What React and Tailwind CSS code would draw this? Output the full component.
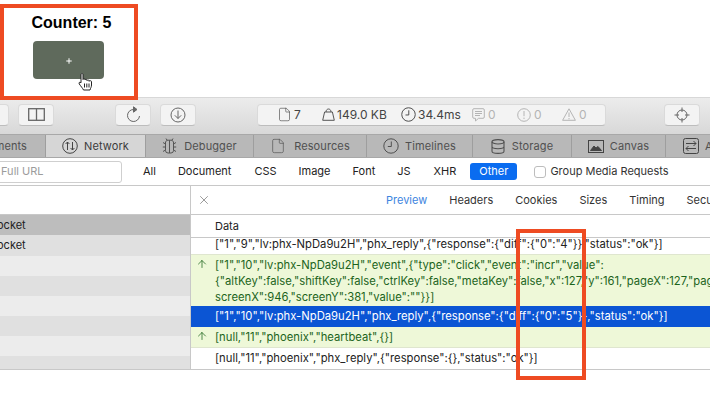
import React from "react";
import { File, X, ArrowUp, Plus } from "lucide-react";

const font = { fontFamily: "Inter, 'Liberation Sans', sans-serif" };

function ClockIcon({ size = 15, color = "#444" }) {
  return (
    <svg width={size} height={size} viewBox="0 0 16 16" fill="none" stroke={color} strokeWidth="1" className="shrink-0">
      <circle cx="8" cy="8" r="7.2" />
      <path d="M8.3 3.5V8.5H4.8" />
    </svg>
  );
}

function ToolBtn({ className, children }) {
  return (
    <div className={"h-[22px] w-[36px] shrink-0 flex items-center justify-center rounded-[4px] bg-[#f3f3f3] border border-[#dadada] border-b-[#bdbdbd] text-[#6b6b6b] " + className}>
      {children}
    </div>
  );
}

function Stat({ w, gap, icon, text, muted }) {
  return (
    <div style={{ width: w, gap }} className={"shrink-0 flex items-center " + (muted ? "text-[#b4b4b4]" : "text-[#444]")}>
      {icon}
      <span>{text}</span>
    </div>
  );
}

function Tab({ w, gap = 6, icon, label, active }) {
  return (
    <div style={{ width: w, gap }} className={"h-full shrink-0 flex items-center justify-center border-r border-[#9e9e9e] " + (active ? "bg-[#d6d6d6] text-[#3c3c3c]" : "bg-[#b8b8b8] text-[#505050]")}>
      {icon}
      <span>{label}</span>
    </div>
  );
}

const filters = [
  ["All", "ml-[21px]"], ["Document", "ml-[22px]"], ["CSS", "ml-[23px]"], ["Image", "ml-[22px]"],
  ["Font", "ml-[22px]"], ["JS", "ml-[22px]"], ["XHR", "ml-[23px]"],
];

const leftRows = [
  ["bg-[#bdbdbd]", "h-[20px]"], ["bg-[#e0e0e0]", "h-[21px]"], ["bg-[#ececec]", "h-[20px]"], ["bg-[#e0e0e0]", "h-[20px]"],
  ["bg-[#ececec]", "h-[20px]"], ["bg-[#e0e0e0]", "h-[20px]"], ["bg-[#ececec]", "h-[20px]"], ["bg-[#e0e0e0]", "h-[13px]"],
];

export default function App() {
  return (
    <div style={font} className="relative w-[710px] h-[400px] overflow-hidden bg-white text-[11px] text-[#222]">
      {/* Page */}
      <div className="h-[97px] w-[137px] flex flex-col items-center pt-[13px]">
        <h1 className="text-[16px] leading-[20px] font-bold text-black ml-[6px]" style={{ fontFamily: "'Liberation Sans', sans-serif" }}>Counter: 5</h1>
        <div className="mt-[8px] w-[71px] h-[38px] pt-[2px] rounded-[4px] bg-[#5f6a5c] flex items-center justify-center text-white">
          <Plus size={8} strokeWidth={3} />
        </div>
      </div>

      {/* Toolbar */}
      <div className="h-[37px] flex items-center bg-gradient-to-b from-[#ececec] to-[#d8d8d8] pb-[3px] text-[12px] border-t border-[#d8d8d8]">
        <ToolBtn className="-ml-[27px]" />
        <ToolBtn className="ml-[9px]">
          <svg width="17" height="13" viewBox="0 0 17 13" fill="none" stroke="#666" strokeWidth="1.3"><rect x="0.7" y="0.7" width="15.6" height="11.6" /><line x1="8.5" y1="0.7" x2="8.5" y2="12.3" /></svg>
        </ToolBtn>
        <ToolBtn className="ml-[61px]">
          <svg width="15" height="17" viewBox="0 0 15 17" fill="none" stroke="#666" strokeWidth="1"><path d="M7.5 3.5A6 6 0 1 0 13.5 10" /><path d="M7.5 0.8L11 3.5L7.5 6.2Z" fill="#666" /></svg>
        </ToolBtn>
        <ToolBtn className="ml-[9px]">
          <svg width="16" height="16" viewBox="0 0 16 16" fill="none" stroke="#666" strokeWidth="1"><circle cx="8" cy="8" r="7" /><path d="M8 3.5V11.5M4.8 8.3L8 11.5L11.2 8.3" /></svg>
        </ToolBtn>
        <div className="ml-[61px] w-[349px] h-[22px] flex items-center rounded-[4px] bg-[#f3f3f3] border border-[#dadada] border-b-[#bdbdbd] whitespace-nowrap">
          <Stat w={46} gap={2} icon={<File size={15} strokeWidth={1} className="ml-[19px]" />} text="7" />
          <div className="w-[18px] shrink-0" />
          <Stat w={79} gap={2} icon={
            <svg width="13" height="13" viewBox="0 0 13 13" fill="none" stroke="#555" strokeWidth="1"><path d="M0.7 12.3L2.6 4H10.4L12.3 12.3ZM4 4C4 0 9 0 9 4" /></svg>
          } text="149.0 KB" />
          <Stat w={71} gap={2} icon={<ClockIcon size={15} />} text="34.4ms" />
          <Stat w={45} gap={3} muted icon={
            <svg width="13" height="14" viewBox="0 0 13 14" fill="none" stroke="#b4b4b4" strokeWidth="1"><path d="M2 0.7H11A1.3 1.3 0 0 1 12.3 2V9A1.3 1.3 0 0 1 11 10.3H6.5L3.5 13V10.3H2A1.3 1.3 0 0 1 0.7 9V2A1.3 1.3 0 0 1 2 0.7ZM3 3.5H10M3 5.5H10M3 7.5H8" /></svg>
          } text="0" />
          <Stat w={45} gap={3} muted icon={
            <svg width="14" height="14" viewBox="0 0 14 14" fill="none" stroke="#b4b4b4" strokeWidth="1"><circle cx="7" cy="7" r="6.3" /><path d="M7 3V8.2M7 9.6V11" /></svg>
          } text="0" />
          <Stat w={30} gap={3} muted icon={
            <svg width="14" height="13" viewBox="0 0 14 13" fill="none" stroke="#b4b4b4" strokeWidth="1"><path d="M7 0.8L13.4 12.3H0.6ZM7 4.5V9M7 10V11.3" /></svg>
          } text="0" />
        </div>
        <ToolBtn className="ml-[58px]">
          <svg width="16" height="16" viewBox="0 0 16 16" fill="none" stroke="#666" strokeWidth="1"><circle cx="8" cy="8" r="5" /><path d="M8 0.5V5M8 11V15.5M0.5 8H5M11 8H15.5" /></svg>
        </ToolBtn>
      </div>

      {/* Tabs */}
      <div className="h-[24px] flex items-stretch text-[11px] tracking-[0.1px] border-y border-[#a8a8a8] bg-[#b8b8b8] whitespace-nowrap overflow-hidden">
        <div style={{ width: 46 }} className="shrink-0 h-full border-r border-[#9e9e9e] text-[#505050] flex items-center justify-end pr-[18px]"><span>ments</span></div>
        <Tab active w={100} label="Network" icon={
          <svg width="16" height="16" viewBox="0 0 16 16" fill="none" stroke="#444" strokeWidth="1"><circle cx="8" cy="8" r="7.3" /><path d="M5.5 12V4M3.6 6L5.5 4L7.4 6M10.5 4V12M8.6 10L10.5 12L12.4 10" /></svg>
        } />
        <Tab w={108} gap={7} label="Debugger" icon={
          <svg width="15" height="16" viewBox="0 0 15 16" fill="none" stroke="#555" strokeWidth="1"><path d="M5 2.2H10L11.5 4V12.5A2.5 2.5 0 0 1 9 15H6A2.5 2.5 0 0 1 3.5 12.5V4ZM7.5 2.2V15M3.5 6L1 4.5M11.5 6L14 4.5M3.5 9H0.8M11.5 9H14.2M3.5 12L1 13.5M11.5 12L14 13.5M5 2.2L4 0.5M10 2.2L11 0.5" /></svg>
        } />
        <Tab w={113} gap={8} label="Resources" icon={<File size={16} strokeWidth={1} />} />
        <Tab w={106} label="Timelines" icon={<ClockIcon size={16} color="#505050" />} />
        <Tab w={99} gap={7} label="Storage" icon={
          <svg width="14" height="15" viewBox="0 0 14 15" fill="none" stroke="#505050" strokeWidth="1.1"><ellipse cx="7" cy="2.8" rx="6" ry="2.2" /><path d="M1 2.8V12.2C1 13.4 3.7 14.4 7 14.4S13 13.4 13 12.2V2.8M1 7.5C1 8.7 3.7 9.7 7 9.7S13 8.7 13 7.5" /></svg>
        } />
        <Tab w={94} label="Canvas" icon={
          <svg width="16" height="13" viewBox="0 0 16 13" fill="none" stroke="#444"><rect x="0.5" y="0.5" width="15" height="12" /><path d="M2.5 10.5L6 6L8 8L10 6.5L13.5 10.5Z" fill="#444" /></svg>
        } />
        <div className="shrink-0 ml-[17px] flex items-center gap-[6px] text-[#505050]">
          <svg width="16" height="16" viewBox="0 0 16 16" fill="none" stroke="#444" strokeWidth="1"><rect x="0.5" y="0.5" width="15" height="15" rx="2" /><path d="M3 5.5H13M10.5 3L13 5.5L10.5 8M13 10.5H3M5.5 8L3 10.5L5.5 13" /></svg>
          <span>A</span>
        </div>
      </div>

      {/* Filter bar */}
      <div className="h-[28px] flex items-center text-[#222] whitespace-nowrap border-b border-[#c8c8c8]">
        <div className="-ml-[20px] w-[142px] h-[22px] shrink-0 bg-white border border-[#cfcfcf] rounded-[3px] flex items-center pl-[20px] text-[#9c9c9c]">Full URL</div>
        {filters.map(([f, c]) => <span key={f} className={c}>{f}</span>)}
        <span className="ml-[14px] h-[17px] w-[47px] flex items-center justify-center rounded-[3px] bg-[#0a6cf0] text-white">Other</span>
        <span className="ml-[17px] w-[12px] h-[12px] rounded-[3px] bg-white border border-[#bdbdbd]" />
        <span className="ml-[4px] text-[#333]">Group Media Requests</span>
      </div>

      {/* Split */}
      <div className="h-[184px] flex border-b border-[#c8c8c8] whitespace-nowrap">
        <div className="w-[191px] shrink-0 border-r border-[#c8c8c8]">
          <div className="h-[29px] border-b border-[#c8c8c8]" />
          {leftRows.map(([c, h], i) => (
            <div key={i} className={"flex items-center " + c + " " + h}>
              {i < 2 && <span className="-ml-[3px]">ocket</span>}
            </div>
          ))}
        </div>
        <div className="flex-1 min-w-0 overflow-hidden flex flex-col text-[11.25px]">
          <div className="h-[29px] shrink-0 flex items-center border-b border-[#c8c8c8] text-[11px]">
            <X size={14} strokeWidth={1} className="ml-[6px] text-[#555] shrink-0" />
            <div className="flex ml-[175px] gap-[22px] text-[#333]">
              <span className="text-[#3d85e0]">Preview</span>
              <span>Headers</span>
              <span>Cookies</span>
              <span>Sizes</span>
              <span>Timing</span>
              <span>Security</span>
            </div>
          </div>
          <div className="h-[23px] shrink-0 flex items-center pl-[24px] pt-[1px] border-b border-[#c8c8c8] text-[11px]">Data</div>
          <div className="h-[16px] shrink-0 pl-[24px] leading-[12px] overflow-hidden text-[#222]">{`["1","9","lv:phx-NpDa9u2H","phx_reply",{"response":{"diff":{"0":"4"}},"status":"ok"}]`}</div>
          <div className="h-[52px] shrink-0 bg-[#eef8d8] border-t border-[#dfe6cf] text-[#1c641c] relative pl-[24px] pt-[2px] leading-[16px]">
            <ArrowUp size={12} strokeWidth={1.5} className="absolute left-[5px] top-[3px]" />
            <div>{`["1","10","lv:phx-NpDa9u2H","event",{"type":"click","event":"incr","value":`}</div>
            <div>{`{"altKey":false,"shiftKey":false,"ctrlKey":false,"metaKey":false,"x":127,"y":161,"pageX":127,"pageY":161,`}</div>
            <div>{`screenX":946,"screenY":381,"value":""}}]`}</div>
          </div>
          <div className="h-[21px] shrink-0 bg-[#0b55d4] text-white flex items-center pl-[24px]">{`["1","10","lv:phx-NpDa9u2H","phx_reply",{"response":{"diff":{"0":"5"}},"status":"ok"}]`}</div>
          <div className="h-[21px] shrink-0 bg-[#eef8d8] border-b border-[#dfe6cf] text-[#1c641c] relative flex items-center pl-[24px]">
            <ArrowUp size={12} strokeWidth={1.5} className="absolute left-[5px] top-[3px]" />
            {`[null,"11","phoenix","heartbeat",{}]`}
          </div>
          <div className="h-[20px] shrink-0 flex items-center pl-[24px]">{`[null,"11","phoenix","phx_reply",{"response":{},"status":"ok"}]`}</div>
        </div>
      </div>

      {/* Bottom */}
      <div className="h-[30px] bg-white" />
      <div className="h-[1px] bg-[#555]" />

      {/* Overlays */}
      <div className="absolute left-0 top-[4px] w-[138px] h-[96px] border-[4px] border-[#ee4b22]" />
      <div className="absolute left-[516px] top-[229px] w-[70px] h-[151px] border-[4px] border-[#ee4b22]" />
      <svg width="15" height="18" viewBox="0 0 15 18" className="absolute left-[78px] top-[73px]" fill="#fff" stroke="#222" strokeWidth="1" strokeLinejoin="round">
        <path d="M3 1.5C3 0.3 5 0.3 5 1.5V6.5C5 5.4 7 5.4 7 6.5V7C7 6 9 6 9 7V7.6C9 6.7 11 6.7 11 7.6V8.3C11 7.5 13.5 7.5 13.5 8.5V12C13.5 14 12.5 15 12 17H5.5C4.5 15 3 13.5 1.3 11C0.4 9.6 1.8 8.5 3 9.8Z" />
        <path d="M6.5 10.5V14.5M8.8 10.5V14.5M11 10.5V14.5" />
      </svg>
    </div>
  );
}
